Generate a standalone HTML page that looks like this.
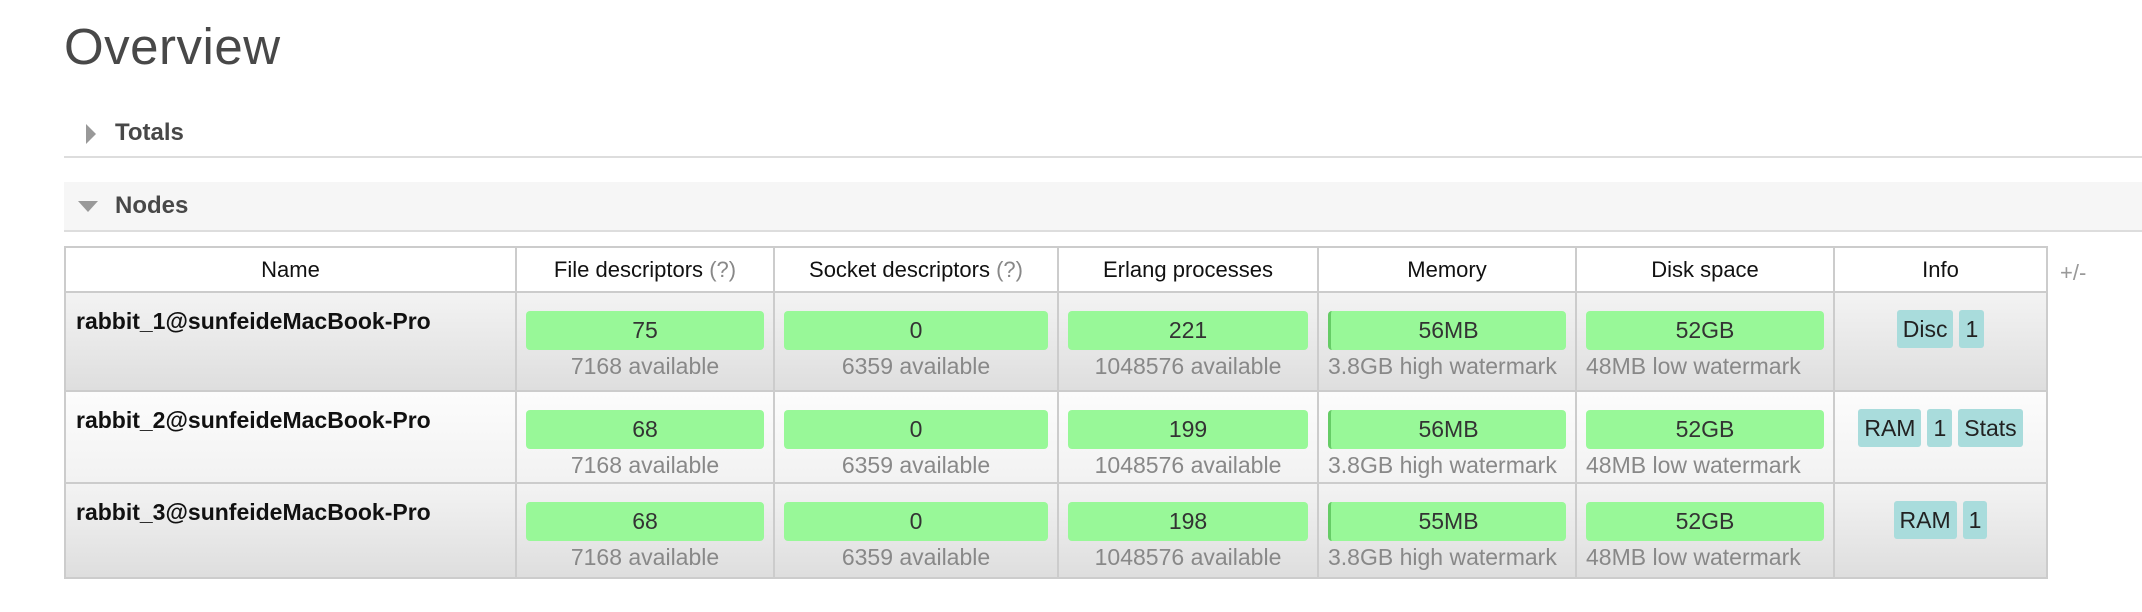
<!DOCTYPE html>
<html><head><meta charset="utf-8"><style>
body{margin:0;background:#fff;font-family:"Liberation Sans",sans-serif;width:2142px;height:612px;overflow:hidden;position:relative}
h1{position:absolute;left:64px;top:17px;margin:0;font-weight:normal;font-size:51px;color:#484848;letter-spacing:0.5px}
.sec{position:absolute;left:64px;right:0;font-weight:bold;font-size:24px;color:#484848}
.tot{top:110px;height:46px;border-bottom:2px solid #ddd}
.nod{top:182px;height:48px;background:#f6f6f6;border-bottom:2px solid #ddd}
.sec span{position:absolute;left:51px;top:50%;transform:translateY(-50%)}
.tri{position:absolute}
table{position:absolute;left:64px;top:246px;border-collapse:collapse;font-size:22px;color:#111}
td,th{border:2px solid #ccc;padding:0;vertical-align:top}
th{font-weight:normal;height:43px;vertical-align:middle;background:#fff}
th .q{color:#888}
tr.g td{background:linear-gradient(#f3f3f3,#dedede)}
tr.w td{background:linear-gradient(#fcfcfc,#f2f2f2)}
.name{font-weight:bold;font-size:23px;padding:15px 0 0 10px;text-align:left;white-space:nowrap}
.bar{margin:18px 9px 0 9px;height:39px;background:#98f898;border-radius:4px;text-align:center;line-height:39px;font-size:23px;color:#333}
.bar.m{border-left:3px solid #6c6}
.sub{text-align:center;color:#888;font-size:23px;margin-top:3px;white-space:nowrap}
.sub.l{text-align:left;padding-left:9px}
.info{text-align:center;padding-top:17px}
.b{display:inline-block;background:#a9dcdc;border-radius:3px;padding:0 6px;height:38px;line-height:38px;font-size:23px;color:#222;margin:0 3px}
.pm{position:absolute;left:2060px;top:260px;font-size:22px;color:#999}
</style></head><body>
<h1>Overview</h1>
<div class="sec tot"><svg class="tri" style="left:21px;top:13px" width="12" height="22"><polygon points="1,1 11,11 1,21" fill="#999"/></svg><span>Totals</span></div>
<div class="sec nod"><svg class="tri" style="left:13px;top:18px" width="22" height="14"><polygon points="1,1 21,1 11,12" fill="#999"/></svg><span>Nodes</span></div>
<table>
<tr><th style="width:449px">Name</th><th style="width:256px">File descriptors <span class="q">(?)</span></th><th style="width:282px">Socket descriptors <span class="q">(?)</span></th><th style="width:258px">Erlang processes</th><th style="width:256px">Memory</th><th style="width:256px">Disk space</th><th style="width:211px">Info</th></tr>
<tr class="g" style="height:99px"><td class="name">rabbit_1@sunfeideMacBook-Pro</td><td><div class="bar">75</div><div class="sub">7168 available</div></td><td><div class="bar">0</div><div class="sub">6359 available</div></td><td><div class="bar">221</div><div class="sub">1048576 available</div></td><td><div class="bar m">56MB</div><div class="sub l">3.8GB high watermark</div></td><td><div class="bar">52GB</div><div class="sub l">48MB low watermark</div></td><td class="info"><span class="b">Disc</span><span class="b">1</span></td></tr>
<tr class="w" style="height:92px"><td class="name">rabbit_2@sunfeideMacBook-Pro</td><td><div class="bar">68</div><div class="sub">7168 available</div></td><td><div class="bar">0</div><div class="sub">6359 available</div></td><td><div class="bar">199</div><div class="sub">1048576 available</div></td><td><div class="bar m">56MB</div><div class="sub l">3.8GB high watermark</div></td><td><div class="bar">52GB</div><div class="sub l">48MB low watermark</div></td><td class="info"><span class="b">RAM</span><span class="b">1</span><span class="b">Stats</span></td></tr>
<tr class="g" style="height:95px"><td class="name">rabbit_3@sunfeideMacBook-Pro</td><td><div class="bar">68</div><div class="sub">7168 available</div></td><td><div class="bar">0</div><div class="sub">6359 available</div></td><td><div class="bar">198</div><div class="sub">1048576 available</div></td><td><div class="bar m">55MB</div><div class="sub l">3.8GB high watermark</div></td><td><div class="bar">52GB</div><div class="sub l">48MB low watermark</div></td><td class="info"><span class="b">RAM</span><span class="b">1</span></td></tr>
</table>
<div class="pm">+/-</div>
</body></html>
